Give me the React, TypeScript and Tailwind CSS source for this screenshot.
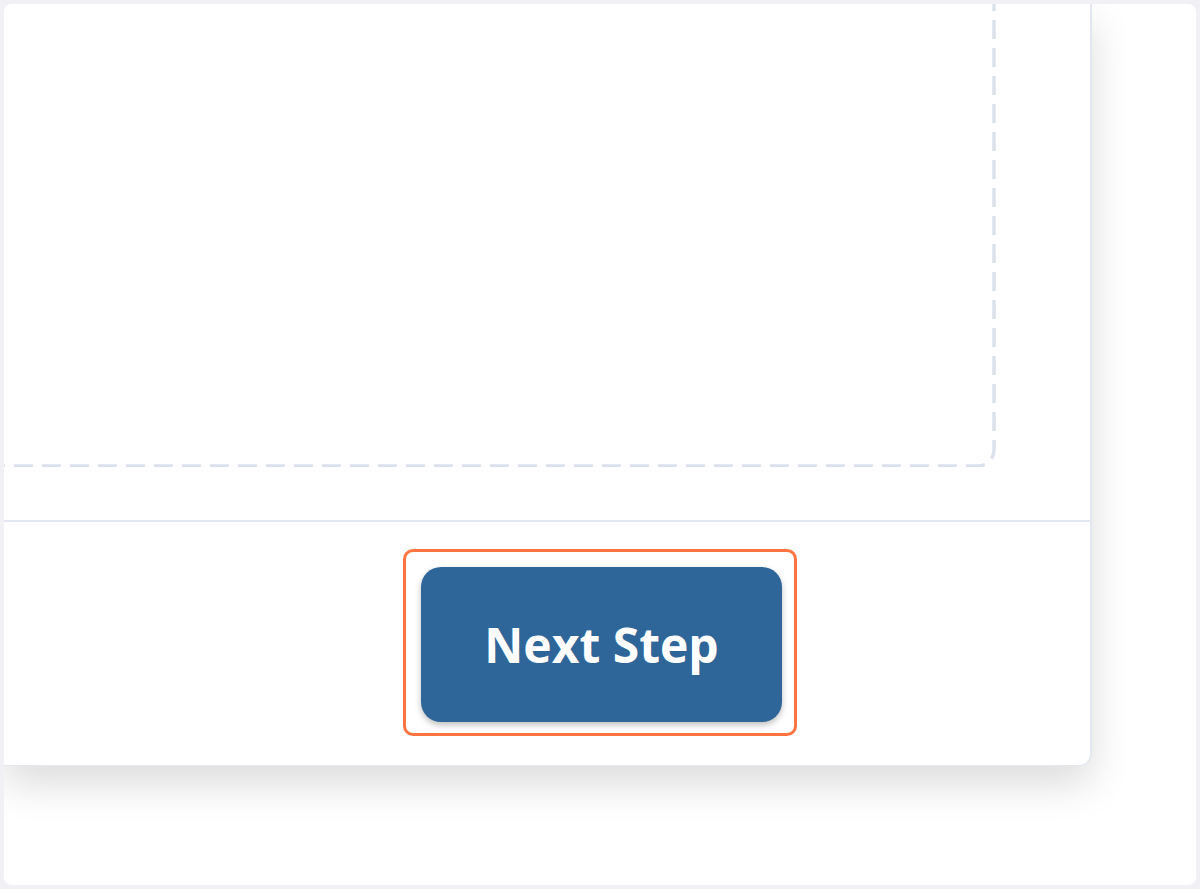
import React from "react";

// Dashed outline for the drop zone; a plain dashed border can't give the long dashes.
function DashedOutline() {
  return (
    <svg className="absolute inset-0" width="1034" height="503" viewBox="0 0 1034 503" fill="none">
      <rect
        x="2"
        y="2"
        width="1028"
        height="500"
        rx="16"
        stroke="#dce2ed"
        strokeWidth="3.5"
        strokeDasharray="19 9"
        strokeDashoffset="5"
      />
    </svg>
  );
}

export default function App() {
  return (
    <div className="h-[889px] w-[1200px] bg-[#f1f0f5] p-[4px]">
      <div className="h-full w-full overflow-hidden rounded-[8px] bg-white">
        {/* Step card */}
        <div className="flex h-[762px] w-[1088px] flex-col rounded-br-[12px] border-r-2 border-b border-[#e3e7ef] bg-white shadow-[0_18px_40px_rgba(0,0,0,0.14)]">
          {/* Upload drop zone */}
          <div className="relative -mt-[40px] -ml-[40px] h-[503px] w-[1034px] shrink-0">
            <DashedOutline />
          </div>

          <div className="mt-[53px] h-[2px] shrink-0 bg-[#e1e6f0]" />

          {/* Footer */}
          <div className="flex flex-1 items-start pt-[27px] pl-[399px]">
            <div className="rounded-[10px] border-[3px] border-[#ff7440] pt-[15px] pr-[12px] pb-[11px] pl-[15px]">
              <button
                type="button"
                className="flex h-[155px] w-[361px] items-center justify-center rounded-[20px] bg-[#2f6699] text-[48px] font-bold text-white shadow-[0_3px_6px_rgba(0,0,0,0.25)]"
                style={{ fontFamily: '"Open Sans", "Noto Sans", sans-serif' }}
              >
                Next Step
              </button>
            </div>
          </div>
        </div>
      </div>
    </div>
  );
}
